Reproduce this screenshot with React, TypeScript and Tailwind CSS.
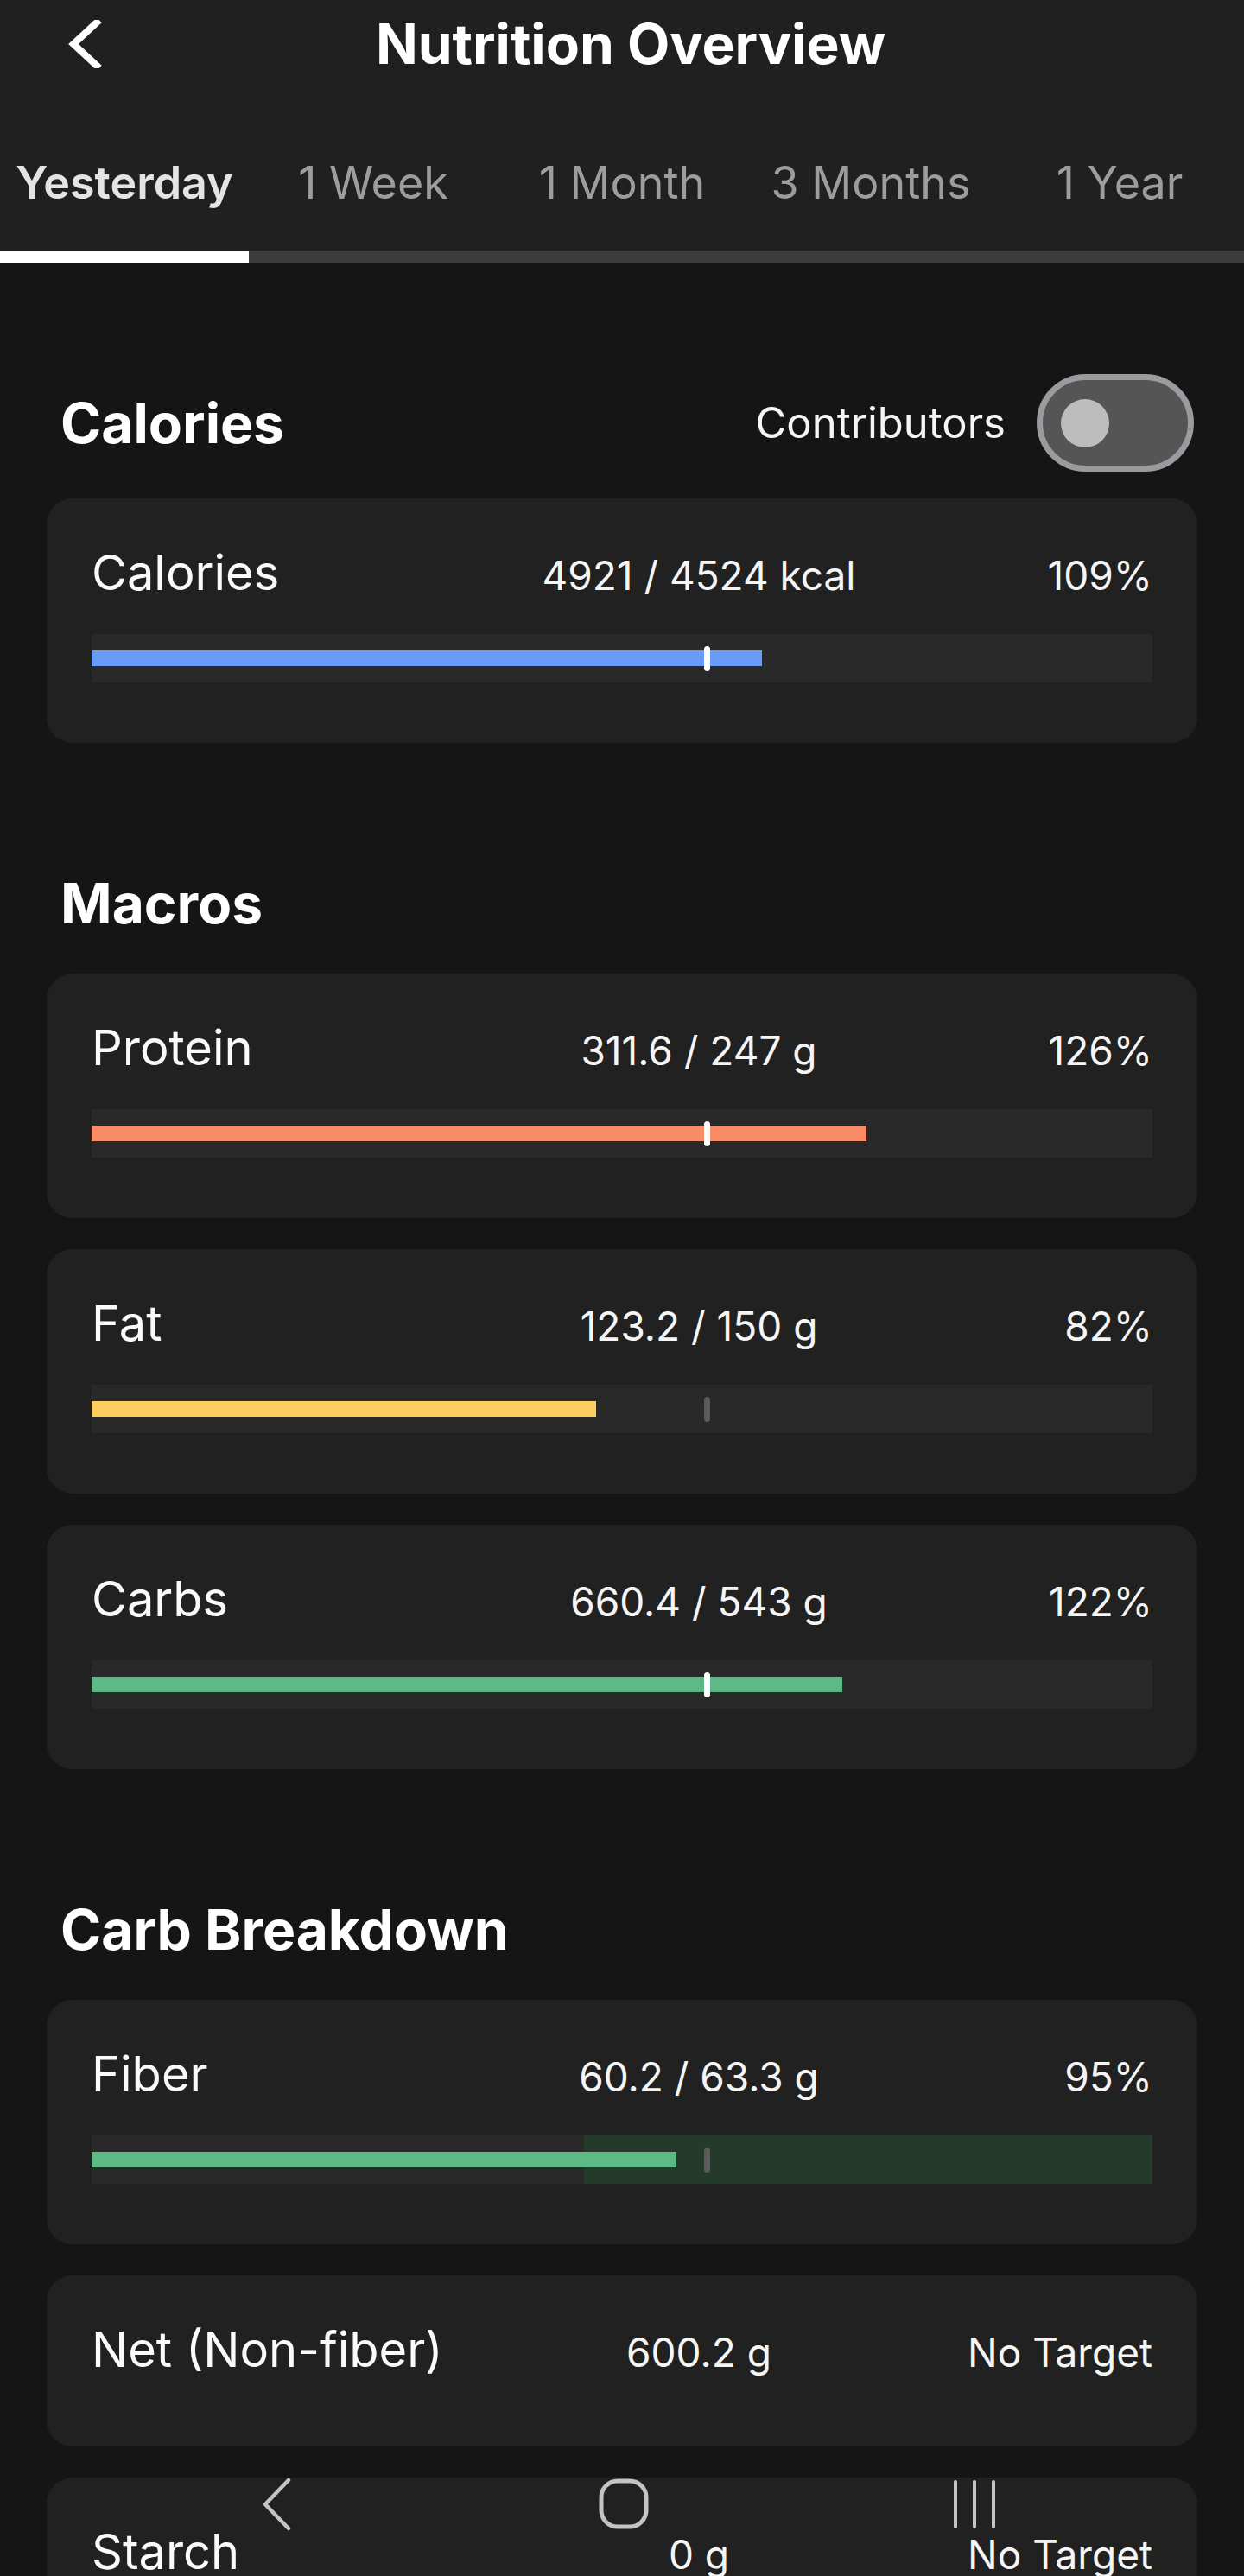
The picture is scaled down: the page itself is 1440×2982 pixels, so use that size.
import React from "react";

type BarRow = {
  name: string;
  value: string;
  pct: string;
  fill?: number;
  color?: string;
  zone?: boolean;
};

const TABS = ["Yesterday", "1 Week", "1 Month", "3 Months", "1 Year"];

// 100% of target sits at 58% of the track
const TARGET_AT = 0.58;

function Marker({ covered }: { covered: boolean }) {
  return (
    <div
      className={
        covered
          ? "absolute top-[14px] h-[29px] w-[7px] rounded-full bg-white"
          : "absolute top-[14px] h-[29px] w-[7px] rounded-full bg-[#5a5a5a]"
      }
      style={{ left: `calc(${TARGET_AT * 100}% - 3px)` }}
    />
  );
}

function Card({ row }: { row: BarRow }) {
  const hasBar = row.fill !== undefined;
  const width = hasBar ? Math.min(row.fill! * TARGET_AT, 1) : 0;
  return (
    <div
      className={
        hasBar
          ? "rounded-[30px] bg-[#212121] px-[52px] pt-[52px] pb-[70px]"
          : "rounded-[30px] bg-[#212121] px-[52px] pt-[52px] pb-[78px]"
      }
    >
      <div className="flex h-[68px] items-baseline">
        <div className="flex-1 text-[56px] leading-[68px] text-[#fafafa]">{row.name}</div>
        <div className="w-[570px] text-center text-[46px] leading-[56px] text-[#f5f5f5]">{row.value}</div>
        <div className="w-[240px] text-right text-[46px] leading-[56px] text-[#f5f5f5]">{row.pct}</div>
      </div>
      {hasBar && (
        <div className="relative mt-[37px] h-[56px] bg-[#292929]">
          {row.zone && (
            <div
              className="absolute inset-y-0 right-0 bg-[#243a2b]"
              style={{ left: `${TARGET_AT * 0.8 * 100}%` }}
            />
          )}
          <div
            className="absolute left-0 top-[19px] h-[18px]"
            style={{ width: `${width * 100}%`, backgroundColor: row.color }}
          />
          <Marker covered={row.fill! >= 1} />
        </div>
      )}
    </div>
  );
}

function Heading({ children }: { children: React.ReactNode }) {
  return (
    <h2 className="ml-[70px] mb-[42px] text-[64px] font-bold leading-[78px] text-white">
      {children}
    </h2>
  );
}

export default function App() {
  const macros: BarRow[] = [
    { name: "Protein", value: "311.6 / 247 g", pct: "126%", fill: 1.26, color: "#fa8b68" },
    { name: "Fat", value: "123.2 / 150 g", pct: "82%", fill: 0.82, color: "#fdcd5f" },
    { name: "Carbs", value: "660.4 / 543 g", pct: "122%", fill: 1.22, color: "#5fb986" },
  ];
  const carbs: BarRow[] = [
    { name: "Fiber", value: "60.2 / 63.3 g", pct: "95%", fill: 0.95, color: "#5fb986", zone: true },
    { name: "Net (Non-fiber)", value: "600.2 g", pct: "No Target" },
    { name: "Starch", value: "0 g", pct: "No Target" },
  ];

  return (
    <div
      className="relative h-[2982px] overflow-hidden bg-[#151515]"
      style={{ fontFamily: "Inter, 'Noto Sans', sans-serif" }}
    >
      {/* top bar */}
      <header className="bg-[#202020]">
        <div className="grid h-[101px] grid-cols-[1fr_auto_1fr] items-center">
          <div className="pl-[78px]">
            <svg width="40" height="56" viewBox="0 0 40 56" fill="none">
              <polyline
                points="34,3 7,28 34,53"
                stroke="#ffffff"
                strokeWidth="8"
                strokeLinecap="square"
              />
            </svg>
          </div>
          <h1 className="ml-[20px] text-[64px] font-bold leading-none text-white">Nutrition Overview</h1>
          <div />
        </div>
        <div className="grid grid-cols-5 pt-[80px] pb-[47px]">
          {TABS.map((t, i) => (
            <div
              key={t}
              className={
                i === 0
                  ? "text-center text-[52px] font-semibold leading-[62px] text-[#e4e4e4]"
                  : "text-center text-[52px] leading-[62px] text-[#9d9d9d]"
              }
            >
              {t}
            </div>
          ))}
        </div>
        <div className="flex h-[14px] bg-[#3c3c3c]">
          <div className="w-[288px] bg-white" />
        </div>
      </header>

      <main className="px-[54px] pt-[129px]">
        {/* calories */}
        <div className="mb-[31px] flex items-center">
          <h2 className="ml-[16px] flex-1 text-[64px] font-bold leading-[78px] text-white">Calories</h2>
          <span className="mr-[36px] text-[49px] text-[#f5f5f5]">Contributors</span>
          <div className="mr-[4px] flex h-[113px] w-[182px] items-center rounded-full border-[7px] border-[#9a9a9f] bg-[#555555] pl-[21px]">
            <div className="h-[56px] w-[56px] rounded-full bg-[#bdbdbd]" />
          </div>
        </div>
        <Card row={{ name: "Calories", value: "4921 / 4524 kcal", pct: "109%", fill: 1.09, color: "#689cf6" }} />

        <div className="mt-[147px] -mx-[54px]">
          <Heading>Macros</Heading>
        </div>
        <div className="flex flex-col gap-[36px]">
          {macros.map((m) => (
            <Card key={m.name} row={m} />
          ))}
        </div>

        <div className="mt-[147px] -mx-[54px]">
          <Heading>Carb Breakdown</Heading>
        </div>
        <div className="flex flex-col gap-[36px]">
          {carbs.map((m) => (
            <Card key={m.name} row={m} />
          ))}
        </div>
      </main>

      {/* system navigation buttons drawn over the content */}
      <div className="absolute left-0 right-0 top-[2868px] flex h-[62px] items-center">
        <svg className="ml-[300px]" width="40" height="62" viewBox="0 0 40 62" fill="none">
          <polyline points="34,3 7,31 34,59" stroke="#c4c4c4" strokeWidth="4.5" strokeLinecap="round" strokeLinejoin="round" />
        </svg>
        <svg className="ml-[352px]" width="62" height="62" viewBox="0 0 62 62" fill="none">
          <rect x="4" y="4" width="52" height="53" rx="19" stroke="#c4c4c4" strokeWidth="5" />
        </svg>
        <svg className="ml-[346px]" width="56" height="62" viewBox="0 0 56 62" fill="none">
          <line x1="6" y1="5" x2="6" y2="57" stroke="#c4c4c4" strokeWidth="4" strokeLinecap="round" />
          <line x1="28" y1="5" x2="28" y2="57" stroke="#c4c4c4" strokeWidth="4" strokeLinecap="round" />
          <line x1="50" y1="5" x2="50" y2="57" stroke="#c4c4c4" strokeWidth="4" strokeLinecap="round" />
        </svg>
      </div>
    </div>
  );
}
